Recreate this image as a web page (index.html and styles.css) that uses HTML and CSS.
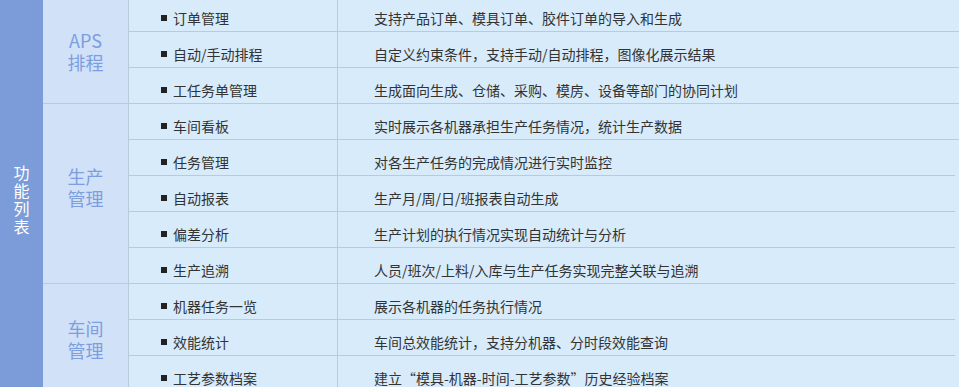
FILE: index.html
```html
<!DOCTYPE html>
<html lang="zh-CN">
<head>
<meta charset="utf-8">
<title>功能列表</title>
<link rel="stylesheet" href="styles.css">
</head>
<body>
<div class="page">
  <div class="side"><span class="side-text">功能列表</span></div>
  <div class="groups">
    <div class="group">
      <div class="cat">APS<br>排程</div>
      <div class="rows">
        <div class="row"><div class="name"><i class="dot"></i>订单管理</div><div class="desc">支持产品订单、模具订单、胶件订单的导入和生成</div></div>
        <div class="row"><div class="name"><i class="dot"></i>自动/手动排程</div><div class="desc">自定义约束条件，支持手动/自动排程，图像化展示结果</div></div>
        <div class="row"><div class="name"><i class="dot"></i>工任务单管理</div><div class="desc">生成面向生成、仓储、采购、模房、设备等部门的协同计划</div></div>
      </div>
    </div>
    <div class="group">
      <div class="cat cat-raised">生产<br>管理</div>
      <div class="rows">
        <div class="row"><div class="name"><i class="dot"></i>车间看板</div><div class="desc">实时展示各机器承担生产任务情况，统计生产数据</div></div>
        <div class="row"><div class="name"><i class="dot"></i>任务管理</div><div class="desc short">对各生产任务的完成情况进行实时监控</div></div>
        <div class="row"><div class="name"><i class="dot"></i>自动报表</div><div class="desc short">生产月/周/日/班报表自动生成</div></div>
        <div class="row"><div class="name"><i class="dot"></i>偏差分析</div><div class="desc short">生产计划的执行情况实现自动统计与分析</div></div>
        <div class="row"><div class="name"><i class="dot"></i>生产追溯</div><div class="desc short">人员/班次/上料/入库与生产任务实现完整关联与追溯</div></div>
      </div>
    </div>
    <div class="group">
      <div class="cat">车间<br>管理</div>
      <div class="rows">
        <div class="row"><div class="name"><i class="dot"></i>机器任务一览</div><div class="desc short">展示各机器的任务执行情况</div></div>
        <div class="row"><div class="name"><i class="dot"></i>效能统计</div><div class="desc short">车间总效能统计，支持分机器、分时段效能查询</div></div>
        <div class="row"><div class="name"><i class="dot"></i>工艺参数档案</div><div class="desc short">建立“模具-机器-时间-工艺参数”历史经验档案</div></div>
      </div>
    </div>
  </div>
</div>
</body>
</html>
```
FILE: styles.css
```css
html, body {
  margin: 0;
  padding: 0;
  background: #d7ebfb;
  overflow: hidden;
}
body {
  font-family: "Noto Sans CJK SC", "Noto Sans", sans-serif;
  color: #333333;
}
.page {
  display: flex;
  margin-top: -4px;
  width: 959px;
}
.side {
  width: 43px;
  flex: none;
  background: #7b9cd8;
  display: flex;
  align-items: center;
  justify-content: center;
  padding-top: 14px;
  box-sizing: border-box;
}
.side-text {
  color: #ffffff;
  font-size: 16px;
  line-height: 20px;
  writing-mode: vertical-rl;
  text-orientation: upright;
  letter-spacing: 2px;
}
.groups {
  flex: 1;
  display: flex;
  flex-direction: column;
}
.group {
  display: flex;
}
.cat {
  width: 86px;
  flex: none;
  box-sizing: border-box;
  background: #d1e1f7;
  border-right: 1px solid #b8cbdc;
  border-bottom: 1px solid #b8cbdc;
  color: #7c9edf;
  font-size: 18px;
  line-height: 22px;
  display: flex;
  align-items: center;
  justify-content: center;
  text-align: center;
  padding-top: 3px;
}
.cat-raised {
  padding-top: 0;
  padding-bottom: 13px;
}
.rows {
  flex: 1;
  display: flex;
  flex-direction: column;
}
.row {
  display: flex;
  height: 36px;
  background: #d7ebfb;
}
.name {
  width: 209px;
  flex: none;
  box-sizing: border-box;
  border-right: 1px solid #b8cbdc;
  border-bottom: 1px solid #b8cbdc;
  display: flex;
  align-items: center;
  padding-left: 32px;
  padding-top: 8px;
  font-size: 14px;
  gap: 6px;
}
.dot {
  width: 6px;
  height: 6px;
  background: #222222;
  display: block;
  flex: none;
}
.desc {
  flex: 1;
  box-sizing: border-box;
  border-bottom: 1px solid #b8cbdc;
  display: flex;
  align-items: center;
  padding-left: 36px;
  padding-top: 8px;
  font-size: 14px;
}
.desc.short {
  margin-right: 4px;
}
```
